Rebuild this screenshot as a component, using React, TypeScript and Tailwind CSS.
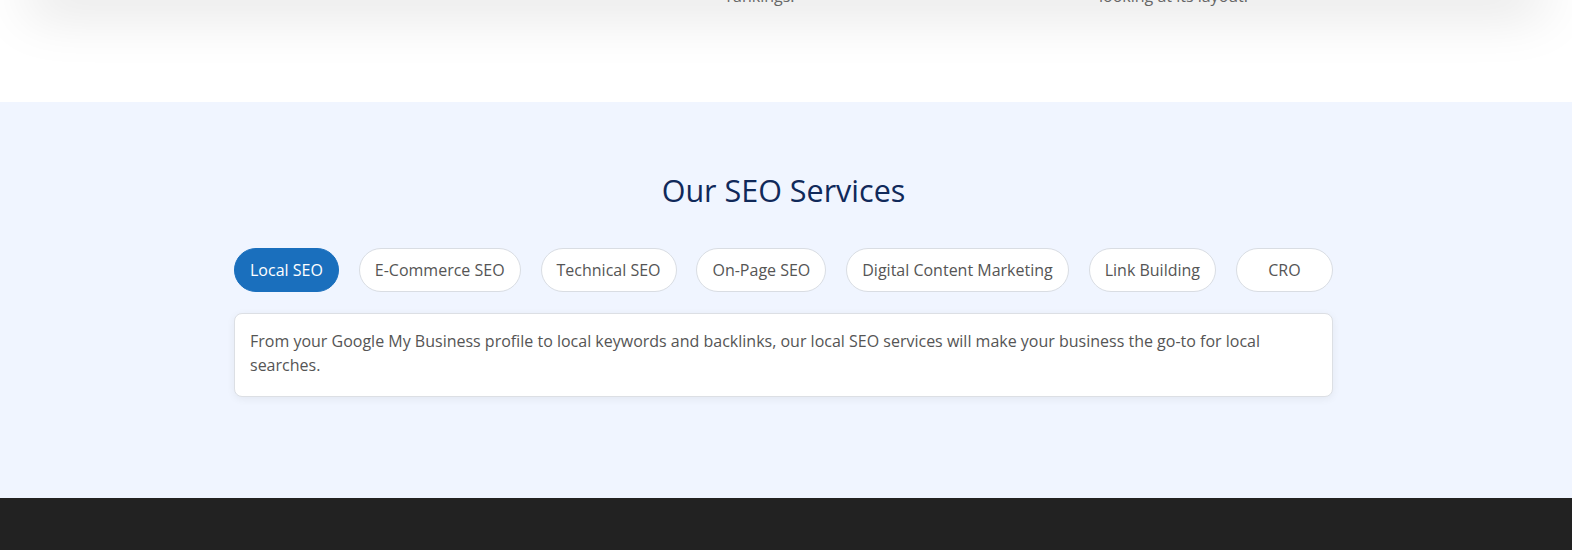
import React from "react";

const tabs = [
  "Local SEO",
  "E-Commerce SEO",
  "Technical SEO",
  "On-Page SEO",
  "Digital Content Marketing",
  "Link Building",
  "CRO",
];

export default function App() {
  return (
    <div className="w-[1572px] font-['Open_Sans','Noto_Sans',sans-serif]">
      {/* tail of previous section */}
      <div className="h-[102px] overflow-hidden bg-white">
        <div className="-mt-[40px] mx-[28px] h-[36px] pt-[24px] shadow-[0_16px_55px_rgba(0,0,0,0.13)]">
          <div className="ml-[113px] grid w-[1239px] grid-cols-3 text-center text-[16px] leading-[24px] text-[#666]">
            <p></p>
            <p>rankings.</p>
            <p>looking at its layout.</p>
          </div>
        </div>
      </div>

      {/* services section */}
      <section className="h-[396px] bg-[#f0f5ff] pt-[68px]">
        <h2 className="ml-[234px] w-[1099px] text-center text-[30.5px] leading-[40px] font-normal text-[#10295a]">
          Our SEO Services
        </h2>
        <div className="ml-[234px] mt-[38px] flex w-[1099px] justify-between">
          {tabs.map((t, i) => (
            <button
              key={t}
              className={
                i === 0
                  ? "h-[44px] rounded-full border border-[#1a6fbd] bg-[#1a6fbd] px-[15px] text-[16px] text-white"
                  : "h-[44px] min-w-[97px] rounded-full border border-[#d9dde3] bg-white px-[15px] text-[16px] text-[#555]"
              }
            >
              {t}
            </button>
          ))}
        </div>
        <div className="ml-[234px] mt-[21px] w-[1099px] rounded-[8px] border border-[#dcdfe4] bg-white px-[15px] pt-[15px] pb-[19px] shadow-[0_2px_8px_rgba(0,0,0,0.06)]">
          <p className="text-[16px] leading-[24px] text-[#555]">
            From your Google My Business profile to local keywords and backlinks, our local SEO services will make your business the go-to for local searches.
          </p>
        </div>
      </section>

      {/* footer */}
      <footer className="h-[52px] bg-[#222222]"></footer>
    </div>
  );
}
